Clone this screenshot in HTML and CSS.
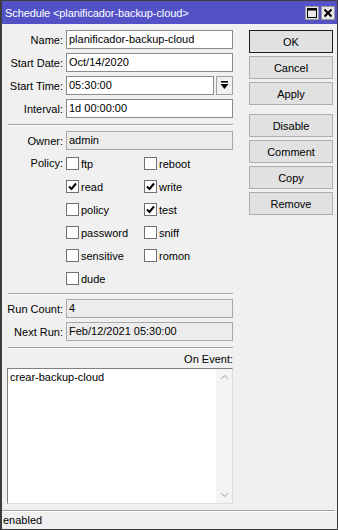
FILE: index.html
```html
<!DOCTYPE html>
<html>
<head>
<meta charset="utf-8">
<link rel="stylesheet" href="styles.css">
</head>
<body>
<div class="window">
  <div class="titlebar">
    <span class="title">Schedule &lt;planificador-backup-cloud&gt;</span>
    <div class="tb-btns">
      <span class="tb-btn"><svg width="12" height="12" viewBox="0 0 12 12"><rect x="1.5" y="1.5" width="9" height="9" fill="none" stroke="#000" stroke-width="1"/><rect x="1.5" y="1.5" width="9" height="2" fill="#000"/></svg></span>
      <span class="tb-btn"><svg width="12" height="12" viewBox="0 0 12 12"><path d="M2.5 2.5 L9.5 9.5 M9.5 2.5 L2.5 9.5" stroke="#000" stroke-width="2"/></svg></span>
    </div>
  </div>
  <div class="content">
    <div class="form">
      <div class="row"><span class="lbl">Name:</span><div class="input">planificador-backup-cloud</div></div>
      <div class="row"><span class="lbl">Start Date:</span><div class="input">Oct/14/2020</div></div>
      <div class="row"><span class="lbl">Start Time:</span><div class="field-dd"><div class="input grow">05:30:00</div><div class="dd"><svg width="9" height="9" viewBox="0 0 9 9"><rect x="1" y="0" width="7" height="1.6" fill="#000"/><path d="M0.5 3 H8.5 L4.5 8 Z" fill="#000"/></svg></div></div></div>
      <div class="row"><span class="lbl">Interval:</span><div class="input">1d 00:00:00</div></div>
      <div class="sep sep1"></div>
      <div class="row"><span class="lbl">Owner:</span><div class="input ro">admin</div></div>
      <div class="policy">
        <span class="lbl plbl">Policy:</span>
        <div class="checks">
          <div class="chk"><span class="box"></span>ftp</div>
          <div class="chk"><span class="box"></span>reboot</div>
          <div class="chk"><span class="box on"><svg width="11" height="11" viewBox="0 0 11 11"><path d="M2 5.5 L4.5 8 L9 2.5" fill="none" stroke="#000" stroke-width="2"/></svg></span>read</div>
          <div class="chk"><span class="box on"><svg width="11" height="11" viewBox="0 0 11 11"><path d="M2 5.5 L4.5 8 L9 2.5" fill="none" stroke="#000" stroke-width="2"/></svg></span>write</div>
          <div class="chk"><span class="box"></span>policy</div>
          <div class="chk"><span class="box on"><svg width="11" height="11" viewBox="0 0 11 11"><path d="M2 5.5 L4.5 8 L9 2.5" fill="none" stroke="#000" stroke-width="2"/></svg></span>test</div>
          <div class="chk"><span class="box"></span>password</div>
          <div class="chk"><span class="box"></span>sniff</div>
          <div class="chk"><span class="box"></span>sensitive</div>
          <div class="chk"><span class="box"></span>romon</div>
          <div class="chk"><span class="box"></span>dude</div>
        </div>
      </div>
      <div class="sep sep2"></div>
      <div class="row"><span class="lbl">Run Count:</span><div class="input ro">4</div></div>
      <div class="row"><span class="lbl">Next Run:</span><div class="input ro">Feb/12/2021 05:30:00</div></div>
      <div class="sep sep3"></div>
      <div class="event-label">On Event:</div>
      <div class="textarea">
        <div class="ta-text">crear-backup-cloud</div>
        <div class="scroll">
          <svg width="9" height="6" viewBox="0 0 9 6"><path d="M1 5 L4.5 1.5 L8 5" fill="none" stroke="#c2c2c2" stroke-width="1.3"/></svg>
          <svg width="9" height="6" viewBox="0 0 9 6"><path d="M1 1 L4.5 4.5 L8 1" fill="none" stroke="#c2c2c2" stroke-width="1.3"/></svg>
        </div>
      </div>
    </div>
    <div class="buttons">
      <div class="btn default">OK</div>
      <div class="btn">Cancel</div>
      <div class="btn">Apply</div>
      <div class="btn group">Disable</div>
      <div class="btn">Comment</div>
      <div class="btn">Copy</div>
      <div class="btn">Remove</div>
    </div>
  </div>
  <div class="status"><span class="status-text">enabled</span></div>
</div>
</body>
</html>
```

FILE: styles.css
```css
* { box-sizing: border-box; }
html, body { margin: 0; padding: 0; }
body {
  width: 338px;
  height: 530px;
  background: #f0f0f0;
  font-family: "Liberation Sans", Arial, sans-serif;
  font-size: 11px;
  color: #000;
  overflow: hidden;
}
.window {
  width: 338px;
  height: 530px;
  border: 1px solid #3c3c3c;
  border-left-width: 2px;
  display: flex;
  flex-direction: column;
  background: #f0f0f0;
}
.titlebar {
  height: 23px;
  background: #5252c6;
  color: #fff;
  display: flex;
  align-items: center;
  justify-content: space-between;
  padding-left: 3px;
  padding-right: 2px;
  flex: none;
}
.title { font-size: 11px; letter-spacing: -0.1px; }
.tb-btns { display: flex; gap: 2px; }
.tb-btn {
  width: 14px;
  height: 14px;
  background: #e8e8e8;
  border: 1px solid #9a9a9a;
  display: flex;
  align-items: center;
  justify-content: center;
}
.tb-btn svg { display: block; }
.content {
  flex: 1;
  display: flex;
  padding-top: 6px;
}
.form {
  width: 231px;
  display: flex;
  flex-direction: column;
}
.row {
  display: flex;
  align-items: center;
  height: 19px;
  margin-bottom: 4px;
}
.lbl {
  width: 64px;
  text-align: right;
  padding-right: 3px;
  flex: none;
}
.input {
  flex: 1;
  height: 19px;
  background: #fff;
  border: 1px solid #8a8a8a;
  padding-left: 2px;
  line-height: 17px;
  white-space: nowrap;
  overflow: hidden;
}
.input.ro {
  background: #ececec;
  border-color: #a9a9a9;
}
.field-dd { flex: 1; display: flex; gap: 2px; }
.grow { flex: 1; }
.dd {
  width: 17px;
  height: 19px;
  border: 1px solid #a0a0a0;
  background: #f0f0f0;
  display: flex;
  align-items: center;
  justify-content: center;
}
.dd svg { display: block; }
.sep {
  height: 2px;
  border-top: 1px solid #a0a0a0;
  border-bottom: 1px solid #fff;
  margin-left: 6px;
}
.sep1 { margin-top: 2px; margin-bottom: 5px; }
.sep2 { margin-top: 3px; margin-bottom: 4px; }
.sep3 { margin-top: 2px; margin-bottom: 2px; }
.policy {
  display: flex;
  margin-top: -2px;
}
.plbl { height: 23px; line-height: 23px; }
.checks {
  display: grid;
  grid-template-columns: 78px 78px;
  grid-auto-rows: 23px;
}
.chk {
  display: flex;
  align-items: center;
  gap: 2px;
}
.box {
  width: 13px;
  height: 13px;
  border: 1px solid #707070;
  background: #fff;
  display: flex;
  align-items: center;
  justify-content: center;
}
.box svg { display: block; }
.event-label {
  text-align: right;
  height: 16px;
  line-height: 16px;
  margin-bottom: 1px;
}
.textarea {
  margin-left: 5px;
  height: 136px;
  background: #fff;
  border: 1px solid;
  border-color: #7f7f7f #dcdcdc #dcdcdc #7f7f7f;
  display: flex;
}
.ta-text {
  flex: 1;
  padding: 2px 0 0 2px;
}
.scroll {
  width: 16px;
  background: #f4f4f4;
  display: flex;
  flex-direction: column;
  justify-content: space-between;
  align-items: center;
  padding: 5px 0 5px;
}
.scroll svg { display: block; }
.buttons {
  margin-left: 16px;
  width: 84px;
  display: flex;
  flex-direction: column;
  gap: 3px;
}
.btn {
  height: 23px;
  background: #e1e1e1;
  border: 1px solid #adadad;
  display: flex;
  align-items: center;
  justify-content: center;
}
.btn.default { border-color: #1e1e1e; }
.btn.group { margin-top: 6px; }
.status {
  height: 19px;
  flex: none;
  border-top: 1px solid #a0a0a0;
  box-shadow: inset 0 1px 0 #fff;
  display: flex;
  align-items: center;
  padding-left: 1px;
  margin-right: 2px;
}
.status-text { line-height: 16px; }
```
